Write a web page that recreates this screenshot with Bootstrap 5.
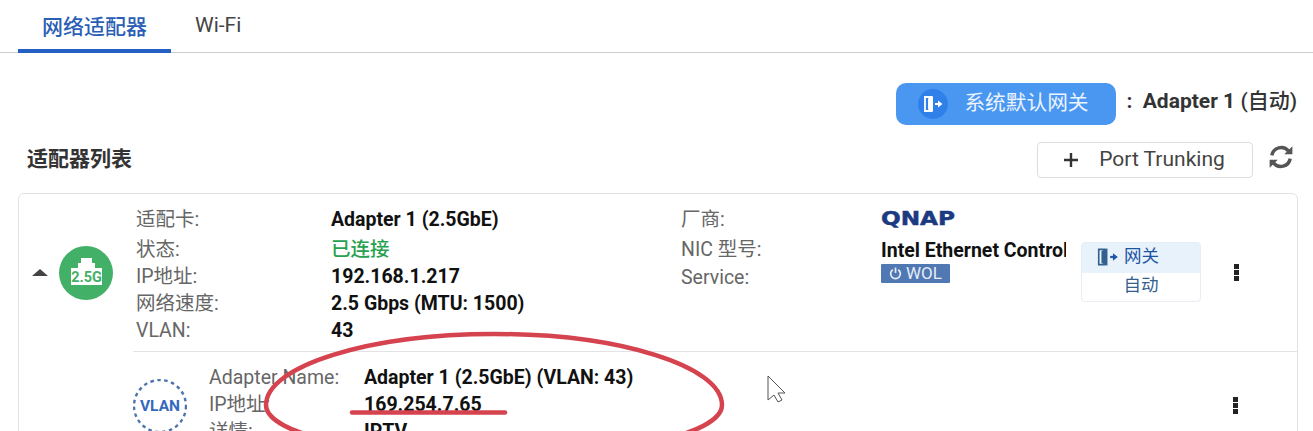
<!DOCTYPE html>
<html lang="zh">
<head>
    <meta charset="UTF-8">
    <meta name="viewport" content="width=device-width, initial-scale=1.0">
    <title>网络适配器</title>
    <link href="https://cdn.jsdelivr.net/npm/bootstrap@5.3.0/dist/css/bootstrap.min.css" rel="stylesheet">
    <style>
        html, body { height: 431px; overflow: hidden; }
        body { position: relative; font-family: Roboto, "Noto Sans CJK SC", sans-serif; color: #333; background: #fff; }

        /* tabs */
        .tab-bar { height: 53px; padding-left: 18px; border-bottom: 1px solid #ccc; }
        .tab-item { height: 53px; font-size: 21px; color: #444; padding: 10px 24px 0; border-bottom: 4px solid transparent; text-align: center; }
        .tab-item.tab-on { color: #2b5fb5; border-bottom-color: #2460c4; width: 153px; padding: 12px 0 0; font-weight: 500; }

        /* top gateway line */
        .gw-line { height: 72px; padding: 30px 16px 0 0; }
        .gw-btn { width: 220px; height: 42px; border-radius: 10px; background: #4a97f2; color: #eaf3fe; font-size: 20.7px; padding-left: 22px; }
        .gw-ico { width: 30px; height: 30px; border-radius: 50%; background: #2f80e8; }
        .gw-txt { margin-left: 16px; }
        .gw-val { font-size: 21px; font-weight: 700; margin-left: 10px; padding-top: 3px; color: #333; white-space: nowrap; }
        .gw-val span { font-weight: 500; }

        /* list header */
        .list-head { height: 68px; padding: 17px 19px 0 27px; }
        .list-title { font-size: 21px; font-weight: 700; color: #333; padding-top: 2px; }
        .trunk-btn { width: 216px; height: 36px; border: 1px solid #ddd; border-radius: 4px; background: #fff; font-size: 21px; color: #444; padding: 0; }
        .trunk-btn svg { margin-right: 20px; margin-left: -2px; }
        .reload { margin-left: 15px; margin-top: 2px; }

        /* adapter card */
        .adapter-box { margin: 0 15px 0 18px; border: 1px solid #e3e3e3; border-radius: 6px; height: 400px; }
        .adapter-main { padding: 11px 0; height: 157px; }
        .caret-up { width: 0; height: 0; border-left: 8px solid transparent; border-right: 8px solid transparent; border-bottom: 7px solid #444; margin-left: 13px; margin-right: 11px; }
        .adapter-ico { width: 54px; height: 54px; margin-right: 23px; }
        .info-col { width: 545px; }
        .info-col2 { width: 385px; }
        .info-row { height: 27px; line-height: 27px; font-size: 19.5px; color: #666; white-space: nowrap; }
        .info-row.row-tall { height: 30px; line-height: 30px; }
        .info-row.row-mid { height: 29px; line-height: 29px; }
        .info-row.row-snug { height: 28px; line-height: 29px; }
        .lbl-a { width: 195px; }
        .lbl-b { width: 200px; }
        .val { font-weight: 700; color: #111; }
        .val-ok { color: #27a14f; font-weight: 500; }
        .val-cut { width: 185px; overflow: hidden; }
        .qnap-mark { height: 32px; font-family: "DejaVu Sans", sans-serif; font-weight: 700; font-size: 19px; line-height: 27px; color: #1c3a82; -webkit-text-stroke: .5px #1c3a82; transform: scaleX(1.22); transform-origin: left; }
        .wol-tag { width: 69px; height: 19px; line-height: 19px; font-size: 17px; background: #5078b2; color: #e5ecf6; border-radius: 1px; font-weight: 400; }
        .gw-card { width: 120px; height: 60px; border: 1px solid #e7edf3; border-radius: 4px; margin-left: 15px; margin-top: 37px; color: #33608f; text-align: center; }
        .gw-card-top { height: 30px; padding: 0 0 3px 14px; background: #e8f2fb; font-size: 17.5px; color: #1d55a3; }
        .gw-card-bot { height: 28px; line-height: 25px; font-size: 17.5px; }
        .kebab { width: 16px; margin-left: 27px; }
        .dot-col { display: block; width: 5px; height: 17px; background: repeating-linear-gradient(#222 0 5px, transparent 5px 6px); margin: 0 auto; }

        .vlan-row { margin-left: 114px; border-top: 1px solid #e3e3e3; padding: 12px 0 0 0; }
        .vlan-ico { width: 54px; height: 54px; margin: 15px 22px 0 0; flex: none; }
        .lbl-v { width: 155px; }
        .vlan-info { width: 1018px; flex: none; }
        .kebab-low { margin-top: 33px; margin-left: 0; }

        /* hand drawn marks on top of the screenshot */
        .marks { position: absolute; left: 0; top: 0; width: 1313px; height: 431px; pointer-events: none; }
    </style>
</head>
<body>

<!-- tabs -->
<div class="tab-bar d-flex">
    <div class="tab-item tab-on">网络适配器</div>
    <div class="tab-item">Wi-Fi</div>
</div>

<!-- default gateway -->
<div class="gw-line d-flex justify-content-end align-items-start">
    <div class="gw-btn d-flex align-items-center">
        <span class="gw-ico d-flex align-items-center justify-content-center">
            <svg width="22" height="20" viewBox="0 0 22 20" fill="none"><path d="M10 3H3v14h7" stroke="#fff" stroke-width="1.800"/><path d="M6 4.500l5-2.500v16l-5-2.500z" fill="#fff"/><path d="M13 10h3" stroke="#fff" stroke-width="2"/><path d="M16 6.500L20.500 10 16 13.500z" fill="#fff"/></svg>
        </span>
        <span class="gw-txt">系统默认网关</span>
    </div>
    <div class="gw-val">: &nbsp;Adapter 1 <span>(自动)</span></div>
</div>

<!-- list header -->
<div class="list-head d-flex align-items-start">
    <div class="list-title flex-grow-1">适配器列表</div>
    <button class="trunk-btn d-flex align-items-center justify-content-center" type="button">
        <svg width="16" height="16" viewBox="0 0 16 16"><path d="M8 1v14M1 8h14" stroke="#333" stroke-width="2.400"/></svg>
        Port Trunking
    </button>
    <svg class="reload" width="26" height="26" viewBox="0 0 24 24" fill="none" stroke="#555" stroke-width="3.200"><path d="M3.500 10.500A8.800 8.800 0 0 1 19 6.500"/><path d="M20.500 13.500A8.800 8.800 0 0 1 5 17.500"/><path d="M22.500 2v7.500H15z" fill="#555" stroke="none"/><path d="M1.500 22v-7.500H9z" fill="#555" stroke="none"/></svg>
</div>

<!-- adapter -->
<div class="adapter-box">
    <div class="adapter-main d-flex align-items-center">
        <span class="caret-up"></span>
        <svg class="adapter-ico" viewBox="0 0 54 54">
            <circle cx="27" cy="27" r="27" fill="#43b068"/>
            <path d="M12 39V22h7v-5h3v-5h11v5h3v5h7v17z" fill="#fff"/>
            <text x="27.500" y="36" text-anchor="middle" font-family="Roboto, sans-serif" font-size="14.500" font-weight="700" fill="#43b068">2.5G</text>
        </svg>
        <div class="info-col align-self-start">
            <div class="info-row row-tall d-flex"><div class="lbl-a">适配卡:</div><div class="val">Adapter 1 (2.5GbE)</div></div>
            <div class="info-row row-snug d-flex"><div class="lbl-a">状态:</div><div class="val-ok">已连接</div></div>
            <div class="info-row d-flex"><div class="lbl-a">IP地址:</div><div class="val">192.168.1.217</div></div>
            <div class="info-row d-flex"><div class="lbl-a">网络速度:</div><div class="val">2.5 Gbps (MTU: 1500)</div></div>
            <div class="info-row d-flex"><div class="lbl-a">VLAN:</div><div class="val">43</div></div>
        </div>
        <div class="info-col2 align-self-start d-flex">
            <div class="lbl-b">
                <div class="info-row row-tall">厂商:</div>
                <div class="info-row row-mid">NIC 型号:</div>
                <div class="info-row">Service:</div>
            </div>
            <div class="val-cut">
                <div class="qnap-mark">QNAP</div>
                <div class="info-row val">Intel Ethernet Controller</div>
                <div class="wol-tag d-flex align-items-center justify-content-center gap-1">
                    <svg width="13" height="13" viewBox="0 0 12 12" fill="none" stroke="#e5ecf6" stroke-width="1.600"><path d="M3.500 2.500a4.500 4.500 0 1 0 5 0"/><path d="M6 .5v5"/></svg>WOL
                </div>
            </div>
        </div>
        <div class="gw-card align-self-start">
            <div class="gw-card-top d-flex align-items-center gap-1">
                <svg width="24" height="22" viewBox="0 0 22 20" fill="none"><path d="M9 3H2.500v14H9" stroke="#33608f" stroke-width="1.500"/><path d="M5 4.500L10.500 2v16L5 15.500z" fill="#33608f"/><path d="M13 10h3" stroke="#1d55a3" stroke-width="2"/><path d="M15.500 6.500L20 10l-4.500 3.500z" fill="#1d55a3"/></svg>
                网关
            </div>
            <div class="gw-card-bot">自动</div>
        </div>
        <div class="kebab align-self-center"><span class="dot-col"></span></div>
    </div>

    <div class="vlan-row d-flex">
        <svg class="vlan-ico" viewBox="0 0 54 54">
            <circle cx="27" cy="27" r="26" fill="none" stroke="#4f74ad" stroke-width="2.400" stroke-dasharray="3.500 3.500"/>
            <text x="27" y="32" text-anchor="middle" font-family="Roboto, sans-serif" font-size="15.500" font-weight="700" fill="#3568c0">VLAN</text>
        </svg>
        <div class="vlan-info">
            <div class="info-row d-flex"><div class="lbl-v">Adapter Name:</div><div class="val">Adapter 1 (2.5GbE) (VLAN: 43)</div></div>
            <div class="info-row d-flex"><div class="lbl-v">IP地址:</div><div class="val">169.254.7.65</div></div>
            <div class="info-row d-flex"><div class="lbl-v">详情:</div><div class="val">IPTV</div></div>
        </div>
        <div class="kebab kebab-low"><span class="dot-col"></span></div>
    </div>
</div>

<!-- red pen marks + mouse pointer -->
<svg class="marks" viewBox="0 0 1313 431" fill="none">
    <path d="M266 405C266 366 369 334 494 334C619 334 722 366 722 405C722 434 619 457 494 457C369 457 266 434 266 405Z" stroke="#d5434f" stroke-width="4.500"/>
    <path d="M352 412.500H505" stroke="#d5434f" stroke-width="4.500" stroke-linecap="round"/>
    <path d="M768 376v24l6-5 4 7 4-2-4-7h7z" fill="#fff" stroke="#555" stroke-width="1"/>
</svg>

<script src="https://cdn.jsdelivr.net/npm/bootstrap@5.3.0/dist/js/bootstrap.bundle.min.js"></script>
</body>
</html>
